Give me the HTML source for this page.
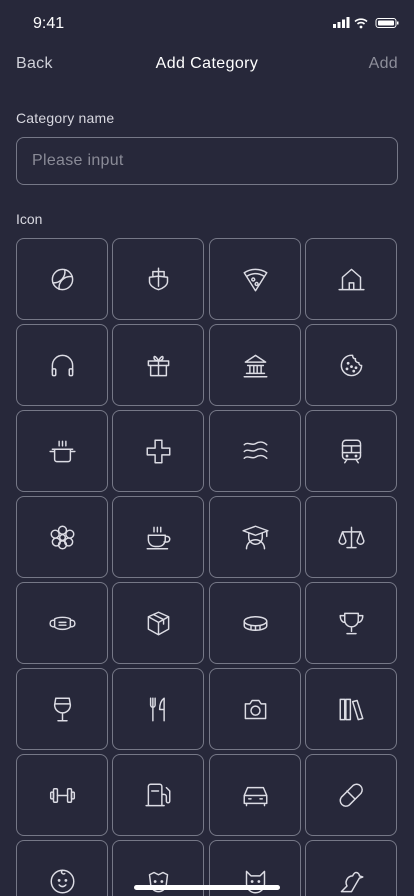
<!DOCTYPE html>
<html style="width:414px;height:896px;overflow:hidden"><head><meta charset="utf-8"><style>
*{margin:0;padding:0;box-sizing:border-box}
body{width:414px;height:896px;background:#27283a;font-family:"Liberation Sans",sans-serif;color:#e6e6ec;position:relative;overflow:hidden}
.t{position:absolute}
.grid{position:absolute;left:16px;top:238px;width:382px}
.c{position:absolute;width:92px;height:82px;border:1px solid #767887;border-radius:8px;display:flex;align-items:center;justify-content:center}
.c svg{width:27px;height:27px;fill:none;stroke:#dcdce4;stroke-width:1.3;stroke-linecap:round;stroke-linejoin:round}
</style></head><body>
<div class="t" style="left:33px;top:15px;font-size:16px;color:#fff">9:41</div>
<svg class="t" style="left:333px;top:17px" width="66" height="12" viewBox="0 0 66 12">
<rect x="0" y="7" width="3" height="4" fill="#fff"/><rect x="4.5" y="5" width="3" height="6" fill="#fff"/><rect x="9" y="2.5" width="3" height="8.5" fill="#fff"/><rect x="13.5" y="0" width="3" height="11" fill="#fff"/>
<path d="M22 4.5a9 9 0 0 1 12 0M24.5 7a5 5 0 0 1 7 0" stroke="#fff" stroke-width="1.6" fill="none"/><circle cx="28" cy="10" r="1.4" fill="#fff"/>
<rect x="43" y="1.5" width="20" height="9" rx="2.5" stroke="#fff" fill="none"/><rect x="45" y="3.5" width="16" height="5" rx="1" fill="#fff"/><rect x="64" y="4.5" width="1.5" height="3" fill="#fff"/>
</svg>
<div class="t" style="left:16px;top:55px;font-size:16px;color:#cfd0d8;letter-spacing:0.3px">Back</div>
<div class="t" style="left:0;width:414px;text-align:center;top:55px;font-size:16px;color:#fff;letter-spacing:0.4px">Add Category</div>
<div class="t" style="right:16px;top:55px;font-size:16px;color:#8d8e9a;letter-spacing:0.3px">Add</div>
<div class="t" style="left:16px;top:110px;font-size:14px;color:#d8d8e0;letter-spacing:0.2px">Category name</div>
<div class="t" style="left:16px;top:137px;width:382px;height:48px;border:1px solid #767887;border-radius:8px;padding:14px 15px;font-size:16px;color:#8a8b97;letter-spacing:0.3px">Please input</div>
<div class="t" style="left:16px;top:211px;font-size:14px;color:#d8d8e0">Icon</div>
<div class="grid">
<div class="c" style="left:0;top:0"><svg viewBox="0 0 24 24"><circle cx="12" cy="12" r="9"/><path d="M3.5 15A10 10 0 0 0 14 3.2M9 20.8A10 10 0 0 1 20.5 9.5"/></svg></div>
<div class="c" style="left:96px;top:0"><svg viewBox="0 0 24 24"><path d="M12 2v16M7 9V5h10v4M4 10l8-1 8 1v4c0 3-4 6-8 7-4-1-8-4-8-7z"/></svg></div>
<div class="c" style="left:193px;top:0"><svg viewBox="0 0 24 24"><path d="M2 6c6-4 14-4 20 0L12 22z"/><path d="M4.5 9c5-3 10-3 15 0"/><circle cx="10" cy="12" r="1.3"/><circle cx="13" cy="16" r="1.3"/></svg></div>
<div class="c" style="left:289px;top:0"><svg viewBox="0 0 24 24"><path d="M1 21h22M4 21V10l8-7 8 7v11M10 21v-6h4v6"/></svg></div>
<div class="c" style="left:0;top:86px"><svg viewBox="0 0 24 24"><path d="M3 18v-6a9 9 0 0 1 18 0v6"/><rect x="3" y="15" width="3" height="6" rx="1"/><rect x="18" y="15" width="3" height="6" rx="1"/></svg></div>
<div class="c" style="left:96px;top:86px"><svg viewBox="0 0 24 24"><rect x="3" y="8" width="18" height="4"/><path d="M5 12v9h14v-9M12 8v13M12 8C10 4 8 3 8 5s2 3 4 3c2 0 4-1 4-3s-2-1-4 3"/></svg></div>
<div class="c" style="left:193px;top:86px"><svg viewBox="0 0 24 24"><path d="M3 9h18L12 3zM5 12h14M7 12v6M10.5 12v6M13.5 12v6M17 12v6M4 19h16M2 22h20"/></svg></div>
<div class="c" style="left:289px;top:86px"><svg viewBox="0 0 24 24"><path d="M21 12a9 9 0 1 1-8-9c0 2 1 3 2.5 3-.5 2 1 3.5 3 3.5 0 1.5 1 2.5 2.5 2.5z"/><circle cx="9" cy="10" r=".6"/><circle cx="12" cy="13" r=".6"/><circle cx="8" cy="15" r=".6"/><circle cx="14" cy="17" r=".6"/><circle cx="16" cy="14" r=".6"/></svg></div>
<div class="c" style="left:0;top:172px"><svg viewBox="0 0 24 24"><path d="M3 10h18M5 10v9a2 2 0 0 0 2 2h10a2 2 0 0 0 2-2v-9M1 12h4M19 12h4M9 3v4M12 3v4M15 3v4"/></svg></div>
<div class="c" style="left:96px;top:172px"><svg viewBox="0 0 24 24"><path d="M9 2h6v7h7v6h-7v7H9v-7H2V9h7z"/></svg></div>
<div class="c" style="left:193px;top:172px"><svg viewBox="0 0 24 24"><path d="M2 6c3-3 7 1 10-1s7-2 10 1M2 12c3-3 7 1 10-1s7-2 10 1M2 18c3-3 7 1 10-1s7-2 10 1"/></svg></div>
<div class="c" style="left:289px;top:172px"><svg viewBox="0 0 24 24"><rect x="4" y="2" width="16" height="17" rx="3"/><path d="M4 7h16M4 13h16M12 7v6M6 22l2-3M18 22l-2-3"/><circle cx="8" cy="16" r=".6"/><circle cx="16" cy="16" r=".6"/></svg></div>
<div class="c" style="left:0;top:258px"><svg viewBox="0 0 24 24"><circle cx="12" cy="12" r="2.5"/><circle cx="12" cy="5.5" r="3.5"/><circle cx="12" cy="18.5" r="3.5"/><circle cx="5.5" cy="9" r="3.5"/><circle cx="18.5" cy="9" r="3.5"/><circle cx="6.5" cy="16" r="3.5"/><circle cx="17.5" cy="16" r="3.5"/></svg></div>
<div class="c" style="left:96px;top:258px"><svg viewBox="0 0 24 24"><path d="M3 10h15v4a6 6 0 0 1-6 6H9a6 6 0 0 1-6-6zM18 11h1.5a2.5 2.5 0 0 1 0 5H17M2 22h18M8 3v4M11 3v4M14 3v4"/></svg></div>
<div class="c" style="left:193px;top:258px"><svg viewBox="0 0 24 24"><path d="M1 6l11-4 11 4-11 4zM6 8v4a6 6 0 0 0 12 0V8M4 22a8 8 0 0 1 16 0M22 6v5"/></svg></div>
<div class="c" style="left:289px;top:258px"><svg viewBox="0 0 24 24"><path d="M12 3v18M8 21h8M4 7h16M4 7l-3 8a3 3 0 0 0 6 0zM20 7l-3 8a3 3 0 0 0 6 0z"/></svg></div>
<div class="c" style="left:0;top:344px"><svg viewBox="0 0 24 24"><path d="M5 8c3-2 11-2 14 0v7c-3 3-11 3-14 0zM5 9C2 9 1 10 1 12s1 3 4 3M19 9c3 0 4 1 4 3s-1 3-4 3M9 11h6M9 13.5h6"/></svg></div>
<div class="c" style="left:96px;top:344px"><svg viewBox="0 0 24 24"><path d="M12 2l9 4v11l-9 5-9-5V6zM3 6l9 5 9-5M12 11v11M7.5 4l9 4.5v4"/></svg></div>
<div class="c" style="left:193px;top:344px"><svg viewBox="0 0 24 24"><ellipse cx="12" cy="10" rx="10" ry="4"/><path d="M2 10v4c0 2 4 4 10 4s10-2 10-4v-4M8 14v3.5M12 14v4M16 14v3.5"/></svg></div>
<div class="c" style="left:289px;top:344px"><svg viewBox="0 0 24 24"><path d="M6 3h12v6a6 6 0 0 1-12 0zM6 5H2c0 4 2 6 4 6M18 5h4c0 4-2 6-4 6M12 15v4M8 21h8"/></svg></div>
<div class="c" style="left:0;top:430px"><svg viewBox="0 0 24 24"><path d="M6 2h12l1 6a7 7 0 0 1-14 0zM5.5 7h13M12 15v7M8 22h8"/></svg></div>
<div class="c" style="left:96px;top:430px"><svg viewBox="0 0 24 24"><path d="M5 2v6a2 2 0 0 0 4 0V2M7 2v20M17 22V2c-3 2-4 6-4 10h4"/></svg></div>
<div class="c" style="left:193px;top:430px"><svg viewBox="0 0 24 24"><path d="M3 7h4l2-3h6l2 3h4v13H3z"/><circle cx="12" cy="13" r="4"/></svg></div>
<div class="c" style="left:289px;top:430px"><svg viewBox="0 0 24 24"><rect x="2" y="3" width="4" height="18"/><rect x="7" y="3" width="4" height="18"/><path d="M13 5l4-1 5 16-4 1z"/></svg></div>
<div class="c" style="left:0;top:516px"><svg viewBox="0 0 24 24"><rect x="4" y="6" width="3.5" height="12" rx="1"/><rect x="16.5" y="6" width="3.5" height="12" rx="1"/><rect x="1.5" y="9" width="2.5" height="6" rx="1"/><rect x="20" y="9" width="2.5" height="6" rx="1"/><path d="M7.5 12h9"/></svg></div>
<div class="c" style="left:96px;top:516px"><svg viewBox="0 0 24 24"><path d="M3 21V4a2 2 0 0 1 2-2h8a2 2 0 0 1 2 2v17M1 21h16M6 8h6M15 11h2a2 2 0 0 1 2 2v4a1.5 1.5 0 0 0 3 0V8l-3-3"/></svg></div>
<div class="c" style="left:193px;top:516px"><svg viewBox="0 0 24 24"><path d="M2 19v-7l3-7h14l3 7v7zM2 12h20M4 19v2M20 19v2M6 15h2M16 15h2"/></svg></div>
<div class="c" style="left:289px;top:516px"><svg viewBox="0 0 24 24"><path d="M10 20.5a5 5 0 0 1-7-7l10.5-10.5a5 5 0 0 1 7 7zM8 8l7 7"/></svg></div>
<div class="c" style="left:0;top:602px"><svg viewBox="0 0 24 24"><circle cx="12" cy="12" r="10"/><path d="M12 2c-2 2 0 4 2 3M9 15c2 2 4 2 6 0"/><circle cx="9" cy="11" r=".6"/><circle cx="15" cy="11" r=".6"/></svg></div>
<div class="c" style="left:96px;top:602px"><svg viewBox="0 0 24 24"><path d="M4 6l4-2 4 2 4-2 4 2-1 8a7 7 0 0 1-14 0z"/><circle cx="9" cy="12" r=".6"/><circle cx="15" cy="12" r=".6"/></svg></div>
<div class="c" style="left:193px;top:602px"><svg viewBox="0 0 24 24"><path d="M4 3l4 4h8l4-4v11a8 8 0 0 1-16 0z"/><circle cx="9" cy="12" r=".6"/><circle cx="15" cy="12" r=".6"/></svg></div>
<div class="c" style="left:289px;top:602px"><svg viewBox="0 0 24 24"><path d="M16 4a3 3 0 0 1 3 3l3 1-3 1-7 12H3l5-5a6 6 0 0 1 5-9c1-2 2-3 3-3z"/></svg></div>
</div>
<div class="t" style="left:134px;top:885px;width:146px;height:5px;border-radius:3px;background:#fff"></div>
</body></html>
